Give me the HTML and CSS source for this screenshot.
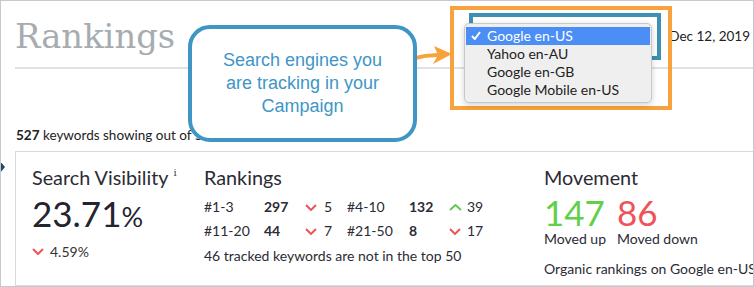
FILE: index.html
```html
<!DOCTYPE html>
<html>
<head>
<meta charset="utf-8">
<link rel="stylesheet" href="styles.css">
</head>
<body>
<div class="frame">
  <div class="main">
    <header class="header">
      <h1 class="title">Rankings</h1>
      <div class="engine-select"></div>
      <div class="date">Dec 12, 2019</div>
    </header>
    <p class="count"><b>527</b> keywords showing out of 573 keywords</p>
    <section class="card">
      <div class="col">
        <h2 class="card-title">Search Visibility<sup class="info">i</sup></h2>
        <div class="big">23.71<span class="pct">%</span></div>
        <div class="delta"><svg class="chev" width="12" height="7" viewBox="0 0 12 7"><polyline points="1,1 6,6 11,1" class="down"/></svg><span>4.59%</span></div>
      </div>
      <div class="col">
        <h2 class="card-title">Rankings</h2>
        <div class="rank-grid">
          <span>#1-3</span><b>297</b><svg class="chev" width="12" height="7" viewBox="0 0 12 7"><polyline points="1,1 6,6 11,1" class="down"/></svg><span>5</span>
          <span>#4-10</span><b>132</b><svg class="chev" width="13" height="7" viewBox="0 0 13 7"><polyline points="1,6 6.5,1 12,6" class="up"/></svg><span>39</span>
          <span>#11-20</span><b>44</b><svg class="chev" width="12" height="7" viewBox="0 0 12 7"><polyline points="1,1 6,6 11,1" class="down"/></svg><span>7</span>
          <span>#21-50</span><b>8</b><svg class="chev" width="12" height="7" viewBox="0 0 12 7"><polyline points="1,1 6,6 11,1" class="down"/></svg><span>17</span>
        </div>
        <p class="note">46 tracked keywords are not in the top 50</p>
      </div>
      <div class="col">
        <h2 class="card-title">Movement</h2>
        <div class="move-grid">
          <span class="big up-num">147</span><span class="big down-num">86</span>
          <span class="small">Moved up</span><span class="small">Moved down</span>
        </div>
        <p class="organic">Organic rankings on Google en-US</p>
      </div>
    </section>
  </div>

  <div class="toggle"></div>

  <svg class="arrow" width="46" height="30" viewBox="0 0 46 30">
    <path d="M2 17.5 Q 16 13.5 30 14" class="arrow-shaft"/>
    <polygon points="41,13 23,5 27,14 22,23" class="arrow-head"/>
  </svg>

  <div class="callout">Search engines you<br>are tracking in your<br>Campaign</div>

  <div class="highlight"></div>

  <ul class="menu">
    <li class="selected"><svg class="check" width="10" height="9" viewBox="0 0 10 9"><polyline points="1,5 3.8,8 9,1"/></svg>Google en-US</li>
    <li>Yahoo en-AU</li>
    <li>Google en-GB</li>
    <li>Google Mobile en-US</li>
  </ul>
</div>
</body>
</html>
```
FILE: styles.css
```css
html, body {
  margin: 0;
  padding: 0;
  background: #fff;
}

.frame {
  position: relative;
  width: 754px;
  height: 287px;
  box-sizing: border-box;
  border: 1px solid #c9c9c9;
  overflow: hidden;
  background: #fff;
  font-family: Lato, "Liberation Sans", sans-serif;
  color: #2b2b35;
}

.main {
  margin-left: 14px;
}

.header {
  display: flex;
  align-items: flex-start;
  height: 66px;
  border-bottom: 2px solid #dde3e3;
}

.title {
  margin: 16px 0 0 0;
  font-family: "DejaVu Serif", "Liberation Serif", serif;
  font-weight: normal;
  font-size: 33.8px;
  line-height: 40px;
  color: #a6acaf;
}

.engine-select {
  margin: 12px 0 0 auto;
  width: 192px;
  height: 47px;
  box-sizing: border-box;
  border: 4px solid #3d90b4;
}

.date {
  margin: 27px 3px 0 8px;
  font-size: 13.5px;
  line-height: 17px;
  color: #222;
}

.count {
  margin: 58px 0 0 1px;
  font-size: 13.5px;
  line-height: 17px;
  color: #222;
}

.count b {
  font-weight: bold;
}

.card {
  margin-top: 7px;
  height: 135px;
  box-sizing: border-box;
  border: 1px solid #dadada;
  border-right: none;
  display: grid;
  grid-template-columns: 172px 340px auto;
  padding: 14px 0 0 16px;
}

.col {
  min-width: 0;
}

.card-title {
  margin: 0;
  font-size: 19.8px;
  line-height: 23px;
  font-weight: normal;
  color: #2b2b35;
  white-space: nowrap;
}

.info {
  font-family: "DejaVu Serif", serif;
  font-size: 10px;
  line-height: 10px;
  vertical-align: top;
  margin-left: 5px;
  position: relative;
  top: 2px;
  color: #444;
}

.big {
  margin-top: 5px;
  font-size: 35px;
  line-height: 38px;
  color: #24242e;
}

.pct {
  font-size: 27px;
}

.delta {
  margin-top: 7px;
  display: flex;
  align-items: center;
  font-size: 14px;
  line-height: 17px;
  color: #333;
}

.delta .chev {
  margin-right: 6px;
}

.chev polyline {
  fill: none;
  stroke-width: 2;
}

.chev .down {
  stroke: #ee5458;
}

.chev .up {
  stroke: #65c857;
}

.rank-grid {
  margin-top: 6px;
  display: grid;
  grid-template-columns: 60px 41px 19px 23px 62px 40px 18px auto;
  align-items: center;
  font-size: 14px;
  line-height: 24px;
  color: #2b2b35;
}

.rank-grid b {
  font-weight: bold;
}

.note {
  margin: 1px 0 0 0;
  font-size: 14px;
  line-height: 24px;
  color: #2b2b35;
}

.move-grid {
  margin-top: 5px;
  display: grid;
  grid-template-columns: 73px auto;
}

.move-grid .big {
  margin: 0;
  font-size: 35px;
  line-height: 36px;
}

.up-num {
  color: #62cf4a;
}

.down-num {
  color: #ef5258;
}

.small {
  font-size: 14px;
  line-height: 17px;
  color: #2b2b35;
}

.organic {
  margin: 13px 0 0 0;
  font-size: 14px;
  line-height: 17px;
  white-space: nowrap;
  color: #2b2b35;
}

.toggle {
  position: absolute;
  left: -1px;
  top: 160px;
  width: 0;
  height: 0;
  border-top: 6px solid transparent;
  border-bottom: 6px solid transparent;
  border-left: 5px solid #1e4a66;
}

.arrow {
  position: absolute;
  left: 410px;
  top: 40px;
}

.arrow-shaft {
  fill: none;
  stroke: #f7a23c;
  stroke-width: 4;
}

.arrow-head {
  fill: #f7a23c;
}

.callout {
  position: absolute;
  left: 187px;
  top: 24px;
  width: 229px;
  height: 117px;
  box-sizing: border-box;
  border: 4px solid #3f95c3;
  border-radius: 22px;
  background: #fff;
  display: flex;
  align-items: center;
  justify-content: center;
  text-align: center;
  font-family: "Liberation Sans", Arial, sans-serif;
  font-size: 18px;
  line-height: 23px;
  color: #3e96c6;
}

.highlight {
  position: absolute;
  left: 449px;
  top: 5px;
  width: 222px;
  height: 104px;
  box-sizing: border-box;
  border: 4px solid #f7a23c;
}

.menu {
  position: absolute;
  left: 463px;
  top: 22px;
  width: 188px;
  height: 80px;
  box-sizing: border-box;
  margin: 0;
  padding: 3px 1px 0 1px;
  list-style: none;
  background: #efefef;
  border: 1px solid #c8c8c8;
  border-radius: 5px;
  box-shadow: 0 2px 6px rgba(0, 0, 0, 0.18);
  font-family: Lato, "Liberation Sans", sans-serif;
  font-size: 14px;
  color: #222;
}

.menu li {
  position: relative;
  height: 18px;
  line-height: 18px;
  padding-left: 21px;
}

.menu li.selected {
  background: #4b8ef5;
  color: #fff;
}

.check {
  position: absolute;
  left: 5px;
  top: 4px;
}

.check polyline {
  fill: none;
  stroke: #fff;
  stroke-width: 2;
}
```
